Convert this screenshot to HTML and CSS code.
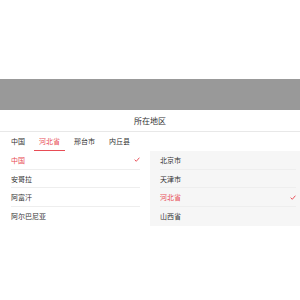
FILE: index.html
```html
<!DOCTYPE html>
<html lang="zh-CN">
<head>
    <meta charset="UTF-8">
    <meta name="viewport" content="width=device-width, initial-scale=1.0">
    <title>所在地区</title>
    <link rel="stylesheet" href="styles.css">
</head>
<body>
    <div class="page"></div>
    <div class="mask"></div>

    <div class="popup">
        <div class="popup-title">所在地区</div>

        <div class="tabs">
            <span class="tab">中国</span>
            <span class="tab active">河北省</span>
            <span class="tab">邢台市</span>
            <span class="tab">内丘县</span>
        </div>

        <div class="lists">
            <ul class="list list-left">
                <li class="item selected">中国
                    <svg class="check" viewBox="0 0 10 8"><polyline points="1,4.2 3.8,7 9,1" /></svg>
                </li>
                <li class="item">安哥拉</li>
                <li class="item">阿富汗</li>
                <li class="item">阿尔巴尼亚</li>
            </ul>
            <ul class="list list-right">
                <li class="item">北京市</li>
                <li class="item">天津市</li>
                <li class="item selected">河北省
                    <svg class="check" viewBox="0 0 10 8"><polyline points="1,4.2 3.8,7 9,1" /></svg>
                </li>
                <li class="item">山西省</li>
            </ul>
        </div>
    </div>
</body>
</html>
```

FILE: styles.css
```css
body {
    margin: 0;
    background-color: #fff;
    color: #333;
    font-family: "Noto Sans CJK SC", "Noto Sans", sans-serif;
}
.page {
    height: 79px;
    background-color: #fff;
}
.mask {
    height: 31px;
    background-color: #999;
}
.popup {
    background-color: #fff;
}
.popup-title {
    height: 21px;
    line-height: 21px;
    text-align: center;
    font-size: 8px;
    border-bottom: 1px solid #e8e8e8;
}
.tabs {
    display: flex;
    gap: 4px;
    padding-left: 6px;
    height: 19px;
}
.tab {
    padding: 0 5px;
    font-size: 7px;
    line-height: 19px;
    box-sizing: border-box;
    height: 19px;
}
.tab.active {
    color: #e84c55;
    border-bottom: 1.5px solid #e84c55;
}
.lists {
    display: flex;
}
.list {
    list-style: none;
    margin: 0;
    padding: 0;
    width: 150px;
}
.list-right {
    background-color: #f6f6f6;
}
.item {
    display: flex;
    align-items: center;
    justify-content: space-between;
    height: 18.7px;
    box-sizing: border-box;
    font-size: 7px;
    border-bottom: 1px solid #eee;
}
.item:last-child {
    border-bottom: none;
}
.list-left .item {
    margin: 0 10px 0 11px;
}
.list-right .item {
    margin: 0 4px 0 10px;
}
.item.selected {
    color: #e84c55;
}
.check {
    width: 6px;
    height: 5px;
    fill: none;
    stroke: #e84c55;
    stroke-width: 1.6;
}
```
